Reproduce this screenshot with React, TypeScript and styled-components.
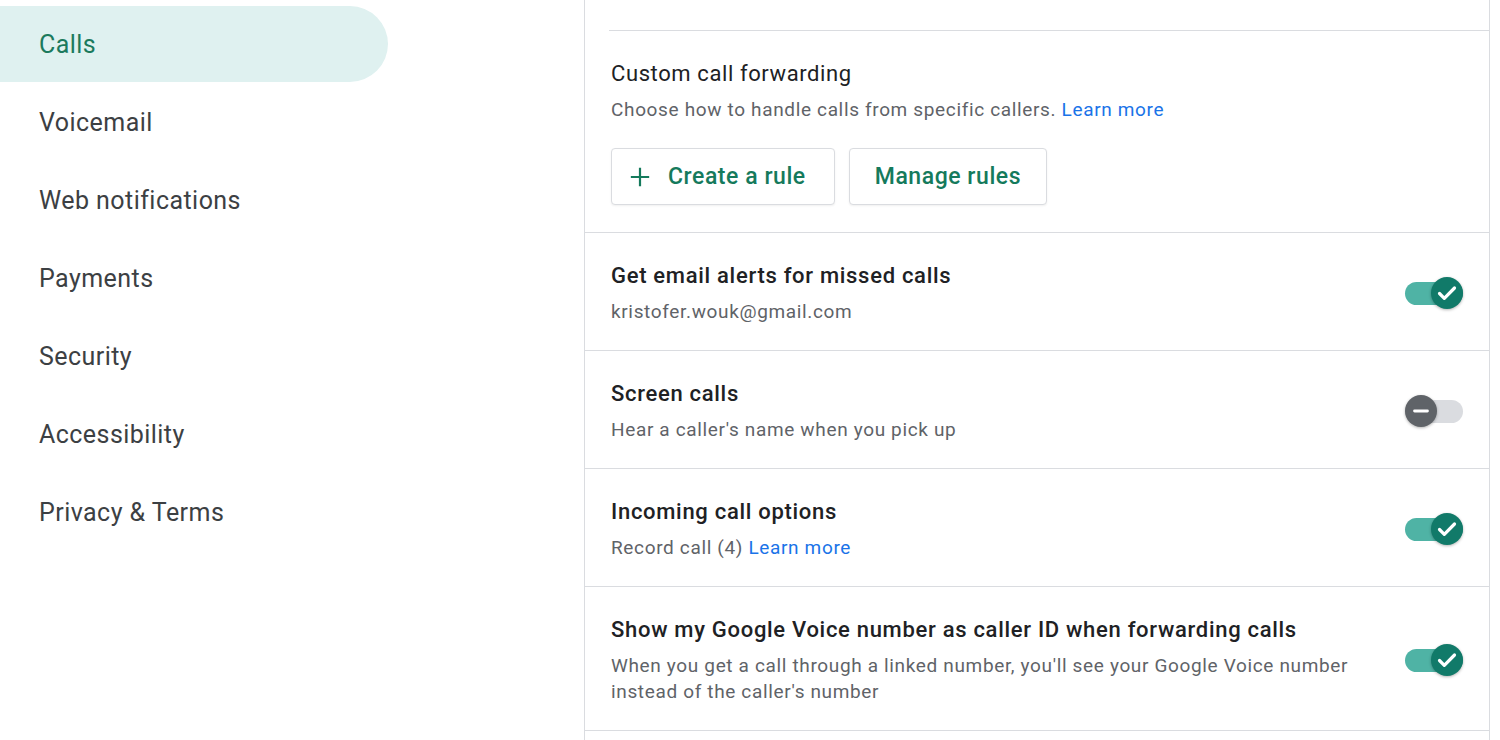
import styled, { createGlobalStyle } from "styled-components";

const GlobalStyle = createGlobalStyle`
	html, body {
		margin: 0;
		padding: 0;
		background: #ffffff;
		font-family: Roboto, "Noto Sans", "Liberation Sans", sans-serif;
		overflow: hidden;
	}
`;

const NAV_ITEMS = [
	"Calls",
	"Voicemail",
	"Web notifications",
	"Payments",
	"Security",
	"Accessibility",
	"Privacy & Terms",
];

type Setting = {
	title: string;
	sub: string;
	link?: string;
	on: boolean;
};

const SETTINGS: Setting[] = [
	{ title: "Get email alerts for missed calls", sub: "kristofer.wouk@gmail.com", on: true },
	{ title: "Screen calls", sub: "Hear a caller's name when you pick up", on: false },
	{ title: "Incoming call options", sub: "Record call (4)", link: "Learn more", on: true },
	{
		title: "Show my Google Voice number as caller ID when forwarding calls",
		sub: "When you get a call through a linked number, you'll see your Google Voice number instead of the caller's number",
		on: true,
	},
];

const Toggle = ({ on }: { on: boolean }) => (
	<Switch>
		<Track $on={on} />
		<Thumb $on={on}>
			{on ? (
				<svg width="24" height="24" viewBox="0 0 24 24">
					<path d="M4.5 12.5l4.8 4.8L19.5 7" fill="none" stroke="#fff" strokeWidth="3.2" strokeLinecap="round" strokeLinejoin="round" />
				</svg>
			) : (
				<svg width="22" height="22" viewBox="0 0 24 24">
					<path d="M5 12h14" fill="none" stroke="#fff" strokeWidth="3.2" strokeLinecap="round" />
				</svg>
			)}
		</Thumb>
	</Switch>
);

export default function App() {
	return (
		<>
			<GlobalStyle />
			<Page>
				<Sidebar>
					{NAV_ITEMS.map((item, i) => (
						<NavItem key={item} $active={i === 0}>
							{item}
						</NavItem>
					))}
				</Sidebar>

				<Card>
					<TopStub />

					<Section>
						<Title $weight={400}>Custom call forwarding</Title>
						<Sub>
							Choose how to handle calls from specific callers. <Link>Learn more</Link>
						</Sub>
						<ButtonRow>
							<OutlineButton>
								<svg width="22" height="22" viewBox="0 0 24 24">
									<path d="M12 2v20M2 12h20" fill="none" stroke="#157a5c" strokeWidth="2.4" />
								</svg>
								Create a rule
							</OutlineButton>
							<OutlineButton>Manage rules</OutlineButton>
						</ButtonRow>
					</Section>

					{SETTINGS.map((s) => (
						<Row key={s.title}>
							<RowText>
								<Title $weight={500}>{s.title}</Title>
								<Sub>
									{s.sub}
									{s.link && (
										<>
											{" "}
											<Link>{s.link}</Link>
										</>
									)}
								</Sub>
							</RowText>
							<Toggle on={s.on} />
						</Row>
					))}
					<Row />
				</Card>
			</Page>
		</>
	);
}

const Page = styled.div`
	display: flex;
	width: 1500px;
	height: 740px;
	background: #fff;
`;

const Sidebar = styled.nav`
	width: 584px;
	flex-shrink: 0;
	padding-top: 6px;
	box-sizing: border-box;
`;

const NavItem = styled.div<{ $active: boolean }>`
	width: 388px;
	height: 76px;
	margin-bottom: 2px;
	display: flex;
	align-items: center;
	padding-left: 39px;
	box-sizing: border-box;
	border-radius: 0 38px 38px 0;
	font-size: 25px;
	letter-spacing: 0.45px;
	color: ${(p) => (p.$active ? "#1b7a5d" : "#3c4043")};
	background: ${(p) => (p.$active ? "#dff1f0" : "transparent")};
`;

const Card = styled.main`
	width: 906px;
	border-left: 1px solid #dadce0;
	border-right: 1px solid #dadce0;
	box-sizing: border-box;
	display: flex;
	flex-direction: column;
`;

const TopStub = styled.div`
	height: 30px;
	margin-left: 24px;
	border-bottom: 1px solid #dadce0;
	flex-shrink: 0;
`;

const Section = styled.section`
	padding: 28px 26px 27px 26px;
	border-bottom: 1px solid #dadce0;
	flex-shrink: 0;
`;

const Title = styled.div<{ $weight: number }>`
	font-size: 22px;
	line-height: 30px;
	font-weight: ${(p) => p.$weight};
	letter-spacing: ${(p) => (p.$weight === 500 ? "0.7px" : "0.6px")};
	color: #202124;
`;

const Sub = styled.div`
	margin-top: 8px;
	font-size: 19px;
	line-height: 26px;
	letter-spacing: 0.65px;
	color: #5f6368;
`;

const Link = styled.span`
	color: #1a73e8;
`;

const ButtonRow = styled.div`
	display: flex;
	gap: 14px;
	margin-top: 25px;
`;

const OutlineButton = styled.button`
	height: 57px;
	padding: 0 28px 0 17px;
	display: flex;
	align-items: center;
	gap: 17px;
	border: 1px solid #dadce0;
	border-radius: 4px;
	background: #fff;
	font-family: inherit;
	font-size: 23px;
	font-weight: 500;
	letter-spacing: 0.55px;
	color: #157a5c;
	box-shadow: 0 1px 2px rgba(60, 64, 67, 0.08);

	&:last-child {
		padding: 0 25px;
	}
`;

const Row = styled.div`
	display: flex;
	align-items: center;
	gap: 40px;
	padding: 28px 26px 25px 26px;
	border-bottom: 1px solid #dadce0;
	flex-shrink: 0;
`;

const RowText = styled.div`
	flex: 1;
	max-width: 760px;
`;

const Switch = styled.div`
	position: relative;
	width: 58px;
	height: 32px;
	flex-shrink: 0;
	display: flex;
	align-items: center;
`;

const Track = styled.div<{ $on: boolean }>`
	width: 58px;
	height: 23px;
	border-radius: 12px;
	background: ${(p) => (p.$on ? "#4fb3a5" : "#dadce0")};
`;

const Thumb = styled.div<{ $on: boolean }>`
	position: absolute;
	top: 0;
	left: ${(p) => (p.$on ? "26px" : "0")};
	width: 32px;
	height: 32px;
	border-radius: 50%;
	display: flex;
	align-items: center;
	justify-content: center;
	background: ${(p) => (p.$on ? "#117a69" : "#5f6368")};
	box-shadow: 0 1px 3px rgba(0, 0, 0, 0.3);
`;
